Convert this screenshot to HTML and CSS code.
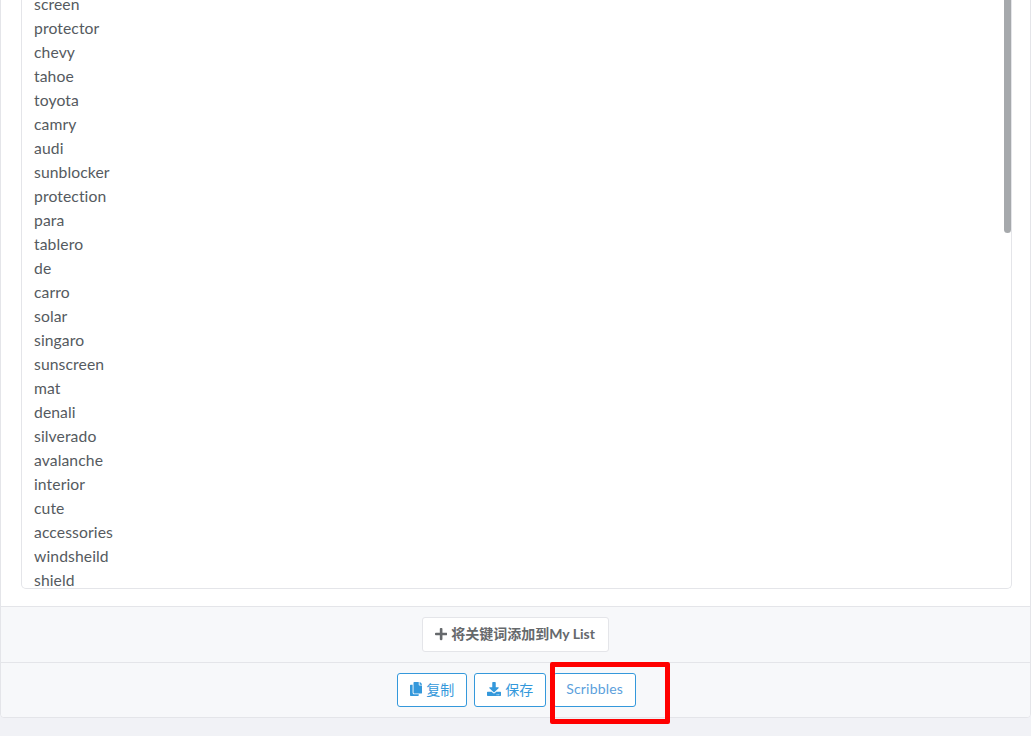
FILE: index.html
```html
<!DOCTYPE html>
<html lang="zh-CN">
  <head>
    <meta charset="UTF-8" />
    <meta name="viewport" content="width=device-width, initial-scale=1.0" />
    <title>关键词</title>
    <link rel="stylesheet" href="styles.css">
  </head>
  <body>
    <div class="card">
      <div class="card-body">
        <div class="keyword-box">
          <div class="keyword-list">
            <div>screen</div>
            <div>protector</div>
            <div>chevy</div>
            <div>tahoe</div>
            <div>toyota</div>
            <div>camry</div>
            <div>audi</div>
            <div>sunblocker</div>
            <div>protection</div>
            <div>para</div>
            <div>tablero</div>
            <div>de</div>
            <div>carro</div>
            <div>solar</div>
            <div>singaro</div>
            <div>sunscreen</div>
            <div>mat</div>
            <div>denali</div>
            <div>silverado</div>
            <div>avalanche</div>
            <div>interior</div>
            <div>cute</div>
            <div>accessories</div>
            <div>windsheild</div>
            <div>shield</div>
          </div>
          <div class="scroll-thumb"></div>
        </div>
      </div>

      <div class="card-footer">
        <button class="btn btn-light" type="button">
          <svg class="icon" viewBox="0 0 448 512"><path d="M416 208H272V64c0-17.67-14.33-32-32-32h-32c-17.67 0-32 14.33-32 32v144H32c-17.67 0-32 14.33-32 32v32c0 17.67 14.33 32 32 32h144v144c0 17.67 14.33 32 32 32h32c17.67 0 32-14.33 32-32V304h144c17.67 0 32-14.33 32-32v-32c0-17.67-14.33-32-32-32z"/></svg>
          将关键词添加到My List
        </button>
      </div>

      <div class="card-footer actions">
        <button class="btn btn-outline" type="button">
          <svg class="icon" viewBox="0 0 448 512"><path d="M320 448v40c0 13.255-10.745 24-24 24H24c-13.255 0-24-10.745-24-24V120c0-13.255 10.745-24 24-24h72v296c0 30.879 25.121 56 56 56h168zm0-344V0H152c-13.255 0-24 10.745-24 24v368c0 13.255 10.745 24 24 24h272c13.255 0 24-10.745 24-24V128H344c-13.2 0-24-10.8-24-24zm120.971-31.029L375.029 7.029A24 24 0 0 0 358.059 0H352v96h96v-6.059a24 24 0 0 0-7.029-16.97z"/></svg>
          复制
        </button>
        <button class="btn btn-outline" type="button">
          <svg class="icon" viewBox="0 0 512 512"><path d="M216 0h80c13.3 0 24 10.7 24 24v168h87.7c17.8 0 26.7 21.5 14.1 34.1L269.7 378.3c-7.5 7.5-19.8 7.5-27.3 0L90.1 226.1c-12.6-12.6-3.7-34.1 14.1-34.1H192V24c0-13.3 10.7-24 24-24zm296 376v112c0 13.3-10.7 24-24 24H24c-13.3 0-24-10.7-24-24V376c0-13.3 10.7-24 24-24h146.7l49 49c20.1 20.1 52.5 20.1 72.6 0l49-49H488c13.3 0 24 10.7 24 24zm-124 88c0-11-9-20-20-20s-20 9-20 20 9 20 20 20 20-9 20-20zm64 0c0-11-9-20-20-20s-20 9-20 20 9 20 20 20 20-9 20-20z"/></svg>
          保存
        </button>
        <button class="btn btn-outline btn-plain" type="button">Scribbles</button>
      </div>
    </div>

    <div class="highlight"></div>
  </body>
</html>
```

FILE: styles.css
```css
html,
body {
  height: 100%;
}

body {
  font-family: "Lato", "Noto Sans CJK SC", sans-serif;
  background-color: #f1f2f6;
  color: #555a60;
  margin: 0;
  padding: 0 0 18px;
  box-sizing: border-box;
  display: flex;
  flex-direction: column;
  justify-content: flex-end;
  overflow: hidden;
  position: relative;
}

.card {
  background-color: white;
  border: 1px solid #e4e5e9;
  border-radius: 4px;
  flex-shrink: 0;
}

.card-body {
  padding: 0 18px 17px 20px;
}

.keyword-box {
  position: relative;
  height: 600px;
  border: 1px solid #e4e5e9;
  border-top: none;
  border-radius: 0 0 5px 5px;
  display: flex;
  flex-direction: column;
  justify-content: flex-end;
  overflow: hidden;
}

.keyword-list {
  padding: 0 12px;
  margin-bottom: -4px;
  font-size: 15.7px;
  letter-spacing: 0.1px;
  line-height: 24px;
}

.scroll-thumb {
  position: absolute;
  top: 0;
  right: 0;
  width: 7px;
  height: 245px;
  background-color: #a6a9ac;
  border-radius: 0 0 4px 4px;
}

.card-footer {
  display: flex;
  justify-content: center;
  gap: 7px;
  background-color: #f7f8fa;
  border-top: 1px solid #e4e5e9;
  padding: 10px 0;
}

.actions {
  padding-left: 2px;
  border-radius: 0 0 4px 4px;
}

.btn {
  display: flex;
  align-items: center;
  gap: 4px;
  height: 34px;
  margin: 0;
  padding: 0 12px 3px;
  border-radius: 3px;
  font-family: inherit;
  font-size: 14px;
  background-color: white;
  cursor: pointer;
}

.btn-light {
  height: 35px;
  padding-right: 13px;
  border: 1px solid #e4e5e9;
  color: #66696c;
  font-weight: bold;
}

.btn-outline {
  border: 1px solid #3498db;
  color: #3498db;
}

.btn-plain {
  color: #5c9fdc;
  letter-spacing: 0.2px;
}

.icon {
  height: 14px;
  width: auto;
  margin-top: 1px;
  fill: currentColor;
}

.highlight {
  position: absolute;
  left: 550px;
  top: 662px;
  width: 120px;
  height: 62px;
  box-sizing: border-box;
  border: 5px solid #ff0000;
  border-radius: 2px;
}
```
